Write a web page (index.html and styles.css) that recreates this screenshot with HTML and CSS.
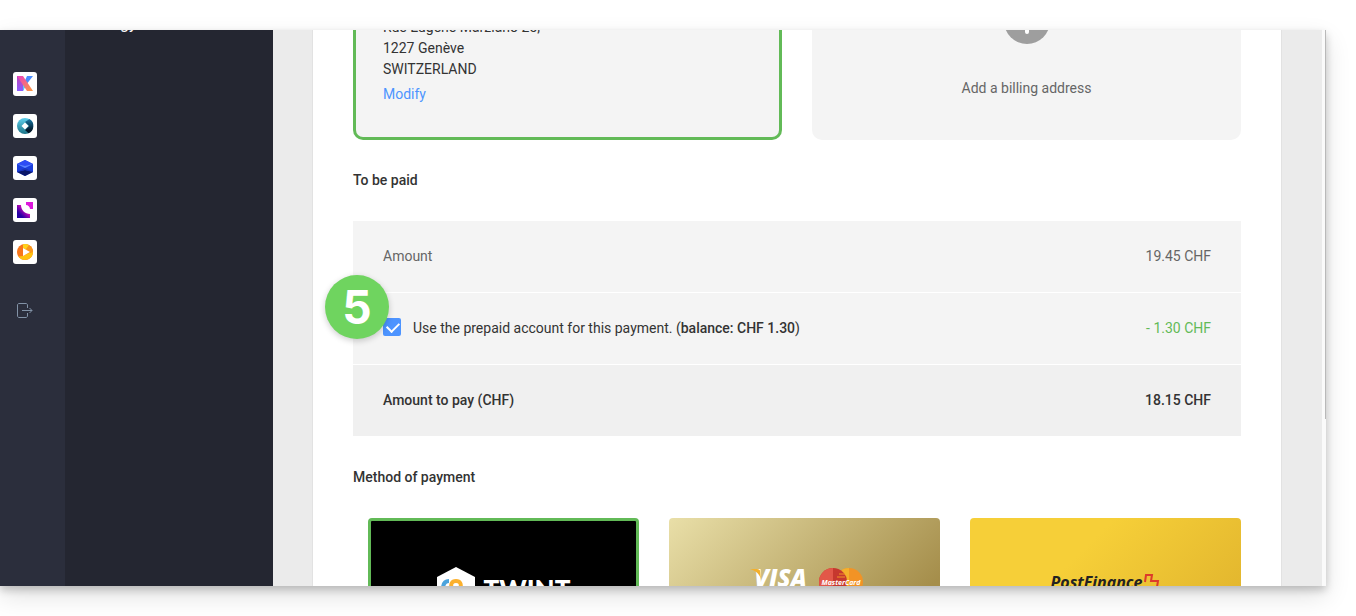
FILE: index.html
```html
<!DOCTYPE html>
<html lang="en">

<head>
    <meta charset="UTF-8">
    <meta name="viewport" content="width=device-width, initial-scale=1.0">
    <title>Payment</title>
    <link rel="stylesheet" href="styles.css">
</head>

<body>
    <div class="window">
        <nav class="app-bar" aria-label="Applications">
            <a href="#" class="app-link" aria-label="kSuite">
                <svg viewBox="0 0 24 24">
                    <defs>
                        <linearGradient id="kLeft" x1="0" y1="0" x2="0" y2="1">
                            <stop offset="0" stop-color="#c044b8" />
                            <stop offset="1" stop-color="#8a5cff" />
                        </linearGradient>
                        <linearGradient id="kBar" x1="0" y1="0" x2="1" y2="1">
                            <stop offset="0" stop-color="#ea3fc4" />
                            <stop offset="1" stop-color="#ff9a3c" />
                        </linearGradient>
                    </defs>
                    <path d="M4 4h6v15H4z" fill="url(#kLeft)" />
                    <path d="M10 13l4-9h6l-7 9-3 6z" fill="#4a8cff" />
                    <path d="M10 11l2 3-2 5z" fill="#52d3f5" />
                    <path d="M4 4h6l10 15h-6z" fill="url(#kBar)" />
                </svg>
            </a>
            <a href="#" class="app-link" aria-label="Hosting">
                <svg viewBox="0 0 24 24">
                    <defs>
                        <linearGradient id="ringLeft" x1="0" y1="0" x2="0" y2="1">
                            <stop offset="0" stop-color="#5fd0ec" />
                            <stop offset="1" stop-color="#1c7488" />
                        </linearGradient>
                        <linearGradient id="ringRight" x1="0" y1="0" x2="0" y2="1">
                            <stop offset="0" stop-color="#1779a6" />
                            <stop offset="0.800" stop-color="#03182a" />
                        </linearGradient>
                    </defs>
                    <circle cx="12" cy="12" r="8" fill="url(#ringLeft)" />
                    <path d="M12 8l4.500-3a8 8 0 0 1-1 14.200L12 16l4-4z" fill="url(#ringRight)" />
                    <path d="M12 8.500l3.500 3.500-3.500 3.500L8.500 12z" fill="#fff" />
                </svg>
            </a>
            <a href="#" class="app-link" aria-label="Cloud">
                <svg viewBox="0 0 24 24">
                    <path d="M12 4l8 4v8l-8 4-8-4V8z" fill="#1c3fdc" />
                    <path d="M12 4l8 4-8 4-8-4z" fill="#2d4cf5" />
                    <path d="M4 8l8 2 8-2-8 4z" fill="#5a84ff" />
                    <path d="M4 16l8-2 8 2-8 4z" fill="#0a1668" />
                    <path d="M4 16l8-4 8 4-8-2z" fill="#1a34b8" />
                </svg>
            </a>
            <a href="#" class="app-link" aria-label="Events">
                <svg viewBox="0 0 24 24">
                    <defs>
                        <linearGradient id="curve" x1="0" y1="1" x2="1" y2="0">
                            <stop offset="0.250" stop-color="#2700a5" />
                            <stop offset="0.650" stop-color="#d20bb8" />
                        </linearGradient>
                    </defs>
                    <path d="M4 7h4c0 5 4 9 9 9v4H4z" fill="url(#curve)" />
                    <path d="M13 4h7v7h-3c0-2-2-4-4-4z" fill="#dd18dc" />
                </svg>
            </a>
            <a href="#" class="app-link" aria-label="Streaming">
                <svg viewBox="0 0 24 24">
                    <circle cx="12" cy="12" r="8" fill="#f7761b" />
                    <path d="M10 4.300A8 8 0 0 1 16 5l-2 5-4-2z" fill="#ffd21a" />
                    <path d="M16 5a8 8 0 0 1 4 7l-4 0-3-3z" fill="#f9971c" />
                    <path d="M10 16l6-3 4-1A8 8 0 0 1 5.500 16.500z" fill="#ffc30f" />
                    <path d="M10 8l7 4-7 4z" fill="#fff" />
                </svg>
            </a>
            <button class="logout" type="button" aria-label="Log out">
                <svg viewBox="0 0 16 16" fill="none" stroke="#8292a6">
                    <path d="M10.500 5V2c0-.800-.700-1.500-1.500-1.500H2C1.200.500.500 1.200.500 2v11c0 .800.700 1.500 1.500 1.500h7c.800 0 1.500-.700 1.500-1.500v-3M5 7.500h10M12.500 5L15 7.500 12.500 10" />
                </svg>
            </button>
        </nav>

        <aside class="side-menu">
            <a href="#" class="side-link">gy</a>
        </aside>

        <main class="content">
            <div class="panel">
                <section class="addresses">
                    <div class="address-card selected">
                        <address>
                            Rue Eugène Marziano 25,<br>
                            1227 Genève<br>
                            SWITZERLAND
                        </address>
                        <a href="#" class="modify">Modify</a>
                    </div>
                    <button class="address-card add-address" type="button">
                        <svg class="plus" viewBox="0 0 46 46">
                            <circle cx="23" cy="23" r="23" fill="#9e9e9e" />
                            <path d="M23 12v22M12 23h22" stroke="#fff" stroke-width="4" stroke-linecap="round" />
                        </svg>
                        Add a billing address
                    </button>
                </section>

                <h2>To be paid</h2>
                <div class="summary">
                    <div class="row muted">
                        <span>Amount</span>
                        <span>19.45 CHF</span>
                    </div>
                    <div class="row prepaid">
                        <span class="step">5</span>
                        <label class="check" for="prepaid">
                            <input type="checkbox" id="prepaid" checked>
                            <span>Use the prepaid account for this payment. (<b>balance: CHF 1.30</b>)</span>
                        </label>
                        <span class="discount">- 1.30 CHF</span>
                    </div>
                    <div class="row total">
                        <span>Amount to pay (CHF)</span>
                        <span>18.15 CHF</span>
                    </div>
                </div>

                <h2>Method of payment</h2>
                <div class="methods">
                    <button class="method twint" type="button">
                        <svg class="twint-logo" viewBox="0 0 38 44">
                            <path d="M19 0l19 10v24L19 44 0 34V10z" fill="#fff" />
                            <path d="M6 22c0-5 2-8 6-8" fill="none" stroke="#4ba3dc" stroke-width="4" />
                            <path d="M15 22c-2-5 0-8 4-8s6 3 4 8" fill="none" stroke="#fbb02d" stroke-width="4" />
                        </svg>
                        <span class="twint-name">TWINT</span>
                    </button>
                    <button class="method card" type="button">
                        <span class="visa">
                            <svg class="visa-wing" viewBox="0 0 12 16">
                                <path d="M0 1h7c2 0 3 1 3 2l1 9C10 6 6 3 0 1z" fill="#f3b02d" />
                            </svg>
                            VISA
                        </span>
                        <svg class="mastercard" viewBox="0 0 44 28">
                            <circle cx="30" cy="14" r="14" fill="#f29325" />
                            <path d="M30 0a14 14 0 0 0 0 28z" fill="#f5b02b" />
                            <circle cx="14" cy="14" r="14" fill="#c6382e" />
                            <path d="M14 0a14 14 0 0 0 0 28z" fill="#e25748" />
                            <path d="M20 6h6M18 9h8" stroke="#f29325" />
                            <text x="22" y="17" class="mastercard-name">MasterCard</text>
                        </svg>
                    </button>
                    <button class="method postfinance" type="button">
                        <span>PostFinance</span>
                        <svg class="post-cross" viewBox="0 0 16 16" fill="none" stroke="#dd3b2a" stroke-width="2">
                            <path d="M1 8l1-7h6l-1 6h7l-1 6H5" />
                        </svg>
                    </button>
                </div>
            </div>
        </main>
        <div class="scrollbar"></div>
    </div>
</body>

</html>
```
FILE: styles.css
```css
:root {
    --green: #62ba57;
    --blue: #4d94ff;
    --text: #333;
    --muted: #666;
    --light: #f4f4f4;
}

* {
    margin: 0;
    padding: 0;
    box-sizing: border-box;
}

body {
    height: 100vh;
    padding: 30px 30px 30px 0;
    overflow: hidden;
    background: #fff;
    color: var(--text);
    font: 14px/21px Roboto, "Liberation Sans", sans-serif;
}

button {
    border: none;
    background: none;
    font: inherit;
    color: inherit;
    cursor: pointer;
}

a {
    color: var(--blue);
    text-decoration: none;
}

.window {
    display: flex;
    height: 100%;
    box-shadow: 0 4px 8px rgba(0, 0, 0, 0.2), 0 10px 24px rgba(0, 0, 0, 0.12);
}

/* Left bars */
.app-bar {
    width: 65px;
    padding: 42px 13px;
    display: flex;
    flex-direction: column;
    gap: 18px;
    background: #2b2e3c;
}

.app-link {
    width: 24px;
    height: 24px;
    border-radius: 3px;
    background: #fff;
}

.app-link svg {
    display: block;
}

.logout {
    width: 24px;
    height: 24px;
    margin-top: 17px;
    padding: 4px;
}

.logout svg {
    display: block;
    width: 16px;
}

.side-menu {
    width: 208px;
    padding-left: 55px;
    overflow: hidden;
    background: #242631;
}

.side-link {
    display: block;
    margin-top: -16px;
    color: #fff;
    font-size: 16px;
    line-height: 20px;
}

/* Main content, scrolled down to the payment part */
.content {
    flex: 1;
    padding: 0 40px 0 39px;
    overflow: hidden;
    background: #ebebeb;
}

.panel {
    margin-top: -13px;
    padding: 0 40px;
    border: 1px solid #e2e2e2;
    border-top: none;
    background: #fff;
}

.addresses {
    display: grid;
    grid-template-columns: 1fr 1fr;
    gap: 30px;
}

.address-card {
    height: 123px;
    padding: 0 30px;
    border-radius: 0 0 10px 10px;
    background: var(--light);
}

.address-card.selected {
    padding: 0 27px;
    border: 3px solid var(--green);
    border-top: none;
}

address {
    margin-bottom: 4px;
    font-style: normal;
}

.add-address {
    display: flex;
    flex-direction: column;
    align-items: center;
    gap: 34px;
    color: var(--muted);
}

.plus {
    flex: none;
    width: 46px;
    margin-top: -19px;
}

h2 {
    margin: 30px 0;
    font-size: 14px;
    font-weight: 500;
    line-height: 21px;
}

/* Summary */
.summary {
    margin-bottom: 31px;
}

.row {
    position: relative;
    display: flex;
    align-items: center;
    justify-content: space-between;
    height: 71px;
    padding: 0 30px;
    background: var(--light);
}

.row + .row {
    margin-top: 1px;
}

.muted {
    color: var(--muted);
}

.discount {
    color: var(--green);
}

.total {
    background: #f0f0f0;
    font-weight: 500;
}

.check {
    display: flex;
    align-items: flex-start;
    gap: 12px;
}

.check b {
    font-weight: 500;
}

.check input {
    appearance: none;
    width: 18px;
    height: 18px;
    border-radius: 2px;
    background: var(--blue);
}

.check input:checked::before {
    content: "";
    display: block;
    width: 10px;
    height: 6px;
    margin: 4px;
    border-left: 2px solid #fff;
    border-bottom: 2px solid #fff;
    transform: rotate(-45deg);
}

.step {
    position: absolute;
    left: -28px;
    top: -18px;
    width: 64px;
    height: 64px;
    border-radius: 50%;
    background: #6fd45f;
    box-shadow: 0 2px 6px rgba(0, 0, 0, 0.2);
    color: #fff;
    font: bold 46px/64px Inter, sans-serif;
    text-align: center;
}

/* Payment methods */
.methods {
    display: grid;
    grid-template-columns: repeat(3, 1fr);
    gap: 30px;
    padding-left: 15px;
}

.method {
    display: flex;
    align-items: center;
    justify-content: center;
    height: 142px;
    border-radius: 4px;
}

.twint {
    gap: 9px;
    border: 3px solid var(--green);
    background: #000;
    color: #fff;
}

.twint-logo {
    width: 38px;
}

.twint-name {
    font: 900 26px/26px Lato, sans-serif;
}

.card {
    gap: 12px;
    padding: 0 0 14px 8px;
    background: linear-gradient(135deg, #e9dfa8, #a58e4b 80%);
}

.visa {
    position: relative;
    padding-bottom: 8px;
    color: #fff;
    font: italic 800 24px/24px "Open Sans", sans-serif;
}

.visa-wing {
    position: absolute;
    left: -4px;
    top: 2px;
    width: 12px;
}

.mastercard {
    width: 44px;
}

.mastercard-name {
    fill: #fff;
    font: italic bold 7px "Open Sans", sans-serif;
    text-anchor: middle;
}

.postfinance {
    gap: 2px;
    padding-bottom: 14px;
    background: linear-gradient(135deg, #f6cf38 35%, #dcae2b);
    color: #222;
    font: italic bold 16px/20px "Open Sans", sans-serif;
}

.post-cross {
    width: 16px;
}

.scrollbar {
    width: 4px;
    height: 100%;
    background: linear-gradient(#b9b9b9, #b9b9b9) right top / 1px 70% no-repeat #fafafa;
}
```
